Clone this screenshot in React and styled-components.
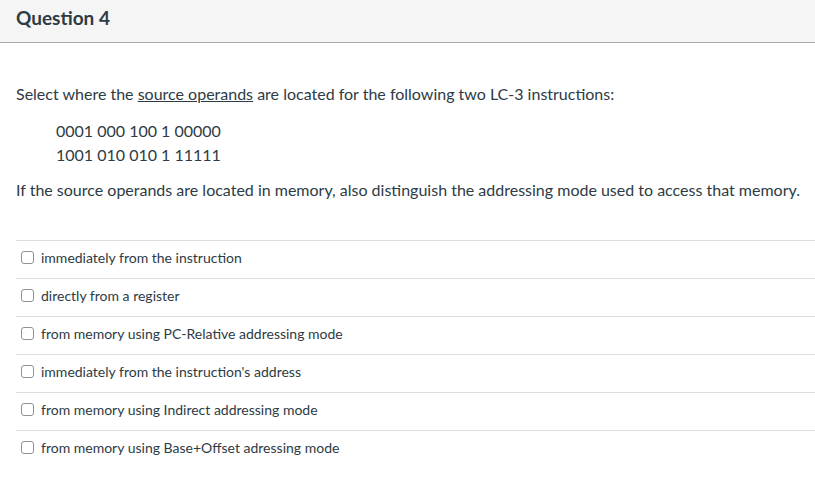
import styled, { createGlobalStyle } from 'styled-components';

const GlobalStyle = createGlobalStyle`
    body {
        margin: 0;
        background: #fff;
        font-family: Lato, "Liberation Sans", sans-serif;
        color: #2d3b45;
    }
`;

let answers = [
    'immediately from the instruction',
    'directly from a register',
    'from memory using PC-Relative addressing mode',
    "immediately from the instruction's address",
    'from memory using Indirect addressing mode',
    'from memory using Base+Offset adressing mode'
];

function App() {
    return (
        <>
            <GlobalStyle />
            <QuestionBlock>
                <QuestionHeader>
                    <QuestionTitle>Question 4</QuestionTitle>
                </QuestionHeader>
                <QuestionBody>
                    <Para>
                        Select where the <Underline>source operands</Underline> are located for the following two LC-3 instructions:
                    </Para>
                    <CodeBlock>
                        <div>0001 000 100 1 00000</div>
                        <div>1001 010 010 1 11111</div>
                    </CodeBlock>
                    <Para>
                        If the source operands are located in memory, also distinguish the addressing mode used to access that memory.
                    </Para>
                </QuestionBody>
                <AnswerList>
                    {
                        answers.map((elem, index) => (
                            <AnswerRow key={index}>
                                <Check type="checkbox" />
                                <AnswerText>{elem}</AnswerText>
                            </AnswerRow>
                        ))
                    }
                </AnswerList>
            </QuestionBlock>
        </>
    )
}
export default App;

const QuestionBlock = styled.div`
    width: 815px;
    min-height: 483px;
`;

const QuestionHeader = styled.div`
    background-color: #f5f5f5;
    border-bottom: 1px solid #a8a8a8;
    height: 42px;
    padding: 0 16px;
    display: flex;
    align-items: center;
`;

const QuestionTitle = styled.div`
    font-size: 19px;
    font-weight: bold;
    color: #2d3b45;
    margin-top: -7px;
`;

const QuestionBody = styled.div`
    padding: 39px 0 0 16px;
    white-space: nowrap;
`;

const Para = styled.p`
    margin: 0;
    font-size: 16px;
    line-height: 24px;
`;

const Underline = styled.span`
    text-decoration: underline;
`;

const CodeBlock = styled.div`
    padding: 13px 0 11px 40px;
    font-size: 16px;
    line-height: 24px;
`;

const AnswerList = styled.div`
    margin-top: 38px;
    margin-left: 16px;
`;

const AnswerRow = styled.label`
    display: flex;
    align-items: center;
    height: 32px;
    padding: 0 0 5px 5px;
    border-top: 1px solid #dcdfe2;
`;

const Check = styled.input`
    appearance: none;
    width: 13px;
    height: 13px;
    margin: 0 7px 0 0;
    border: 1px solid #8b949b;
    border-radius: 3px;
    background: #fff;
`;

const AnswerText = styled.span`
    font-size: 14px;
    color: #2d3b45;
`;
